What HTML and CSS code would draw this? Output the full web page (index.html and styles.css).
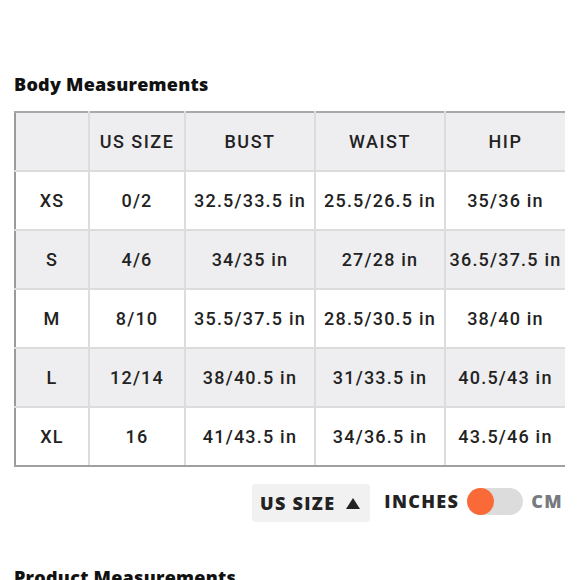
FILE: index.html
```html
<!DOCTYPE html>
<html>
<head>
<meta charset="utf-8">
<link rel="stylesheet" href="styles.css">
</head>
<body>
<div class="page">
  <h2 class="title">Body Measurements</h2>
  <table class="sizes">
    <colgroup>
      <col class="c1"><col class="c2"><col class="c3"><col class="c4"><col class="c5">
    </colgroup>
    <thead>
      <tr><th></th><th>US SIZE</th><th>BUST</th><th>WAIST</th><th>HIP</th></tr>
    </thead>
    <tbody>
      <tr><td>XS</td><td>0/2</td><td>32.5/33.5 in</td><td>25.5/26.5 in</td><td>35/36 in</td></tr>
      <tr class="alt"><td>S</td><td>4/6</td><td>34/35 in</td><td>27/28 in</td><td>36.5/37.5 in</td></tr>
      <tr><td>M</td><td>8/10</td><td>35.5/37.5 in</td><td>28.5/30.5 in</td><td>38/40 in</td></tr>
      <tr class="alt"><td>L</td><td>12/14</td><td>38/40.5 in</td><td>31/33.5 in</td><td>40.5/43 in</td></tr>
      <tr><td>XL</td><td>16</td><td>41/43.5 in</td><td>34/36.5 in</td><td>43.5/46 in</td></tr>
    </tbody>
  </table>
  <div class="controls">
    <button class="sort">US SIZE <span class="tri"></span></button>
    <div class="units">
      <span class="unit on">INCHES</span>
      <span class="switch"><span class="knob"></span></span>
      <span class="unit off">CM</span>
    </div>
  </div>
  <h2 class="title next">Product Measurements</h2>
</div>
</body>
</html>
```
FILE: styles.css
```css
html, body {
  margin: 0;
  padding: 0;
  background: #fff;
  overflow: hidden;
}
.page {
  width: 580px;
  height: 580px;
  padding: 0 0 0 14px;
  box-sizing: border-box;
  color: #1b1b1b;
}
.title {
  margin: 0;
  padding-top: 73px;
  font-family: "Open Sans", sans-serif;
  font-weight: 800;
  font-size: 18px;
  line-height: 22px;
  letter-spacing: 0.25px;
  color: #111;
}
.sizes {
  margin-top: 16px;
  border-collapse: collapse;
  table-layout: fixed;
  width: 550px;
  font-family: Roboto, "Liberation Sans", sans-serif;
  font-weight: 500;
  font-size: 18px;
  letter-spacing: 1.2px;
  color: #222;
}
.c1 { width: 74px; }
.c2 { width: 96px; }
.c3 { width: 130px; }
.c4 { width: 130px; }
.c5 { width: 120px; }
.sizes th, .sizes td {
  height: 57px;
  padding: 0;
  text-align: center;
  vertical-align: middle;
  font-weight: 500;
  border: 2px solid #dcdcdc;
  white-space: nowrap;
}
.sizes thead th {
  background: #eeeef0;
  letter-spacing: 1.5px;
  border-top-color: #a9a9a9;
}
.sizes tr.alt td { background: #eeeef0; }
.sizes th:first-child, .sizes td:first-child { border-left-color: #9c9c9c; }
.sizes th:last-child, .sizes td:last-child { border-right: none; }
.sizes tbody tr:last-child td { border-bottom-color: #a0a0a0; }

.controls {
  display: flex;
  align-items: center;
  margin-top: 17px;
  padding-left: 238px;
  gap: 14px;
}
.sort {
  display: flex;
  align-items: center;
  gap: 11px;
  height: 38px;
  padding: 0 10px 0 8px;
  border: none;
  border-radius: 3px;
  background: #f1f1f1;
  font-family: "Open Sans", sans-serif;
  font-weight: 800;
  font-size: 18px;
  letter-spacing: 1.3px;
  color: #222;
}
.tri {
  width: 0; height: 0;
  border-left: 7px solid transparent;
  border-right: 7px solid transparent;
  border-bottom: 11px solid #222;
}
.units {
  display: flex;
  align-items: center;
  gap: 8px;
  margin-top: -4px;
}
.unit {
  font-family: "Open Sans", sans-serif;
  font-weight: 800;
  font-size: 18px;
  letter-spacing: 1.3px;
}
.unit.on { color: #232323; }
.unit.off { color: #777b80; }
.switch {
  position: relative;
  width: 56px;
  height: 27px;
  border-radius: 14px;
  background: #dcdcdc;
}
.knob {
  position: absolute;
  left: 0; top: 0;
  width: 27px; height: 27px;
  border-radius: 50%;
  background: #fa6a38;
}
.next {
  padding-top: 44px;
}
```
